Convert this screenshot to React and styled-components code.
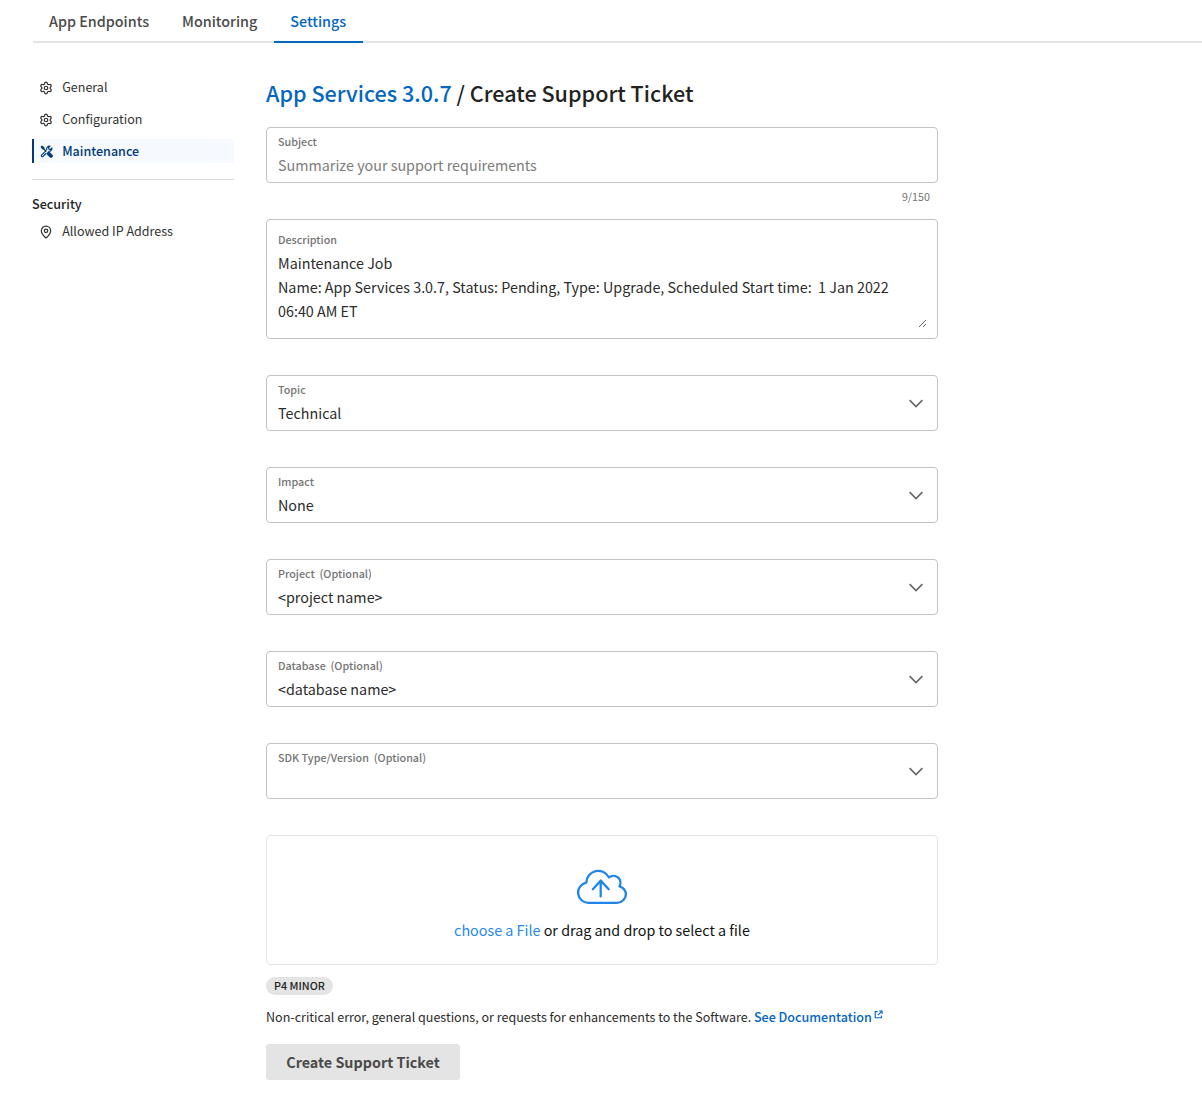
import React from "react";
import styled, { createGlobalStyle, css } from "styled-components";
import { Settings, MapPin } from "lucide-react";

const GlobalStyle = createGlobalStyle`
  *, *::before, *::after { box-sizing: border-box; }
  body {
    margin: 0;
    background: #fff;
    color: #2b2b2b;
    font-family: "Noto Sans CJK SC", "Noto Sans", sans-serif;
    font-size: 12.54px;
  }
`;

const Page = styled.div`
  width: 100%;
  min-height: 1112px;
  overflow: hidden;
`;

const TabBar = styled.nav`
  display: flex;
  height: 43px;
  margin-left: 33px;
  box-shadow: inset 0 -2px 0 #e4e4e4;
`;

const Tab = styled.a`
  padding: 0 16.5px;
  font-size: 14.33px;
  font-weight: 500;
  line-height: 41px;
  color: ${(p) => (p.$active ? "#0266c2" : "#4a4a4a")};
  border-bottom: 2px solid ${(p) => (p.$active ? "#0266c2" : "transparent")};
  &:first-child { margin-left: -0.5px; }
`;

const Body = styled.div`
  display: flex;
  gap: 32px;
  padding: 32px 32px 0;
`;

const Sidebar = styled.aside`
  width: 202px;
  flex: none;
`;

const NavList = styled.ul`
  display: flex;
  flex-direction: column;
  gap: 8px;
  margin: 0;
  padding: 0;
  list-style: none;
`;

const NavItem = styled.li`
  display: flex;
  align-items: center;
  gap: 9px;
  height: 24px;
  padding-left: 5.2px;
  border-left: 2px solid transparent;
  border-radius: 0 3px 3px 0;
  line-height: 22px;
  color: #333;
  ${(p) =>
    p.$active &&
    css`
      border-left-color: #003a78;
      background: #f6faff;
      color: #003a78;
      font-weight: 500;
    `}
`;

const NavIcon = styled.span`
  display: flex;
  flex: none;
  justify-content: center;
  width: 14px;
  padding-top: 1px;
`;

const Divider = styled.hr`
  margin: 16px 0 0;
  border: 0;
  border-top: 1px solid #d8d8d8;
`;

const NavHeading = styled.h2`
  margin: 13px 0 4px;
  font-size: 12.6px;
  font-weight: 500;
  line-height: 22px;
  color: #222;
`;

const Main = styled.main`
  width: 672px;
  flex: none;
`;

const Title = styled.h1`
  margin: 0 0 18px;
  padding-top: 1px;
  font-size: 21.57px;
  font-weight: 500;
  line-height: 33px;
  color: #222;
`;

const TitleLink = styled.a`
  color: #0266c2;
`;

const Fields = styled.div`
  display: flex;
  flex-direction: column;
  gap: 36px;
`;

const Field = styled.div`
  display: flex;
  align-items: center;
  justify-content: space-between;
  height: ${(p) => p.$height || 56}px;
  padding: 0 ${(p) => (p.$wide ? 10 : 14)}px 0 11px;
  border: 1px solid #c3c3c3;
  border-radius: 4px;
`;

const FieldText = styled.label`
  display: flex;
  flex-direction: column;
  flex: 1;
  height: ${(p) => (p.$tall ? 96 : 44)}px;
`;

const FieldLabel = styled.span`
  flex: none;
  height: 20px;
  font-size: 10.75px;
  font-weight: 500;
  line-height: 17px;
  color: #747474;
`;

const Optional = styled.span`
  margin-left: 4.8px;
`;

const control = css`
  display: block;
  flex: none;
  width: 100%;
  margin: 0;
  padding: 0;
  border: 0;
  outline: 0;
  background: none;
  font-family: inherit;
  font-size: 14.33px;
  line-height: 24px;
  color: #2b2b2b;
`;

const Input = styled.input`
  ${control}
  height: 24px;
  &::placeholder { color: #7c7c7c; opacity: 1; }
`;

const TextArea = styled.textarea`
  ${control}
  height: 77px;
  overflow: hidden;
  resize: vertical;
`;

const Value = styled.span`
  ${control}
  height: 24px;
`;

const Counter = styled.div`
  height: 36px;
  padding: 5px 8px 0 0;
  font-size: 10.75px;
  line-height: 17px;
  text-align: right;
  color: #747474;
`;

const DropZone = styled.div`
  display: flex;
  flex-direction: column;
  align-items: center;
  height: 130px;
  padding-top: 33px;
  border: 1px solid #e5e5e5;
  border-radius: 4px;
`;

const DropText = styled.p`
  margin: 13px 0 0;
  font-size: 14.33px;
  line-height: 24px;
  color: #111;
`;

const ChooseLink = styled.a`
  color: #2488ea;
`;

const Badge = styled.span`
  display: block;
  width: 67px;
  height: 18px;
  margin-top: 12px;
  border-radius: 9px;
  background: #e4e4e4;
  font-size: 10.75px;
  font-weight: 500;
  line-height: 17px;
  text-align: center;
  color: #222;
`;

const Note = styled.p`
  display: flex;
  margin: 11px 0 0;
  line-height: 22px;
  white-space: pre;
`;

const DocLink = styled.a`
  display: flex;
  gap: 2px;
  font-weight: 500;
  color: #0266c2;
  svg { margin-top: 4px; }
`;

const Submit = styled.button`
  display: block;
  width: 194px;
  height: 36px;
  margin-top: 16px;
  padding: 0;
  border: 0;
  border-radius: 3px;
  background: #e4e4e4;
  font-family: inherit;
  font-size: 14.33px;
  font-weight: 700;
  line-height: 34px;
  color: #4a4a4a;
`;

const ToolsIcon = () => (
  <svg width="13" height="13" viewBox="0 0 26 26" fill="none">
    <path d="M1 3.5 3.5 1l5 3.2.4 2.6 5 5-2.1 2.1-5-5-2.6-.4z" fill="currentColor" />
    <path d="M14 16.2 16.2 14l2.6.2 5.4 5.4a3.2 3.2 0 0 1-4.6 4.6l-5.4-5.4z" fill="currentColor" stroke="currentColor" strokeWidth="1.2" />
    <path
      d="M10.6 12.6 3 20.2a2 2 0 0 0 2.8 2.8l6-6M13.6 9.6c-.8-3.4.6-7.6 6.4-7.4l-2.8 3 .5 3.1 3.1.5 3-2.8c.4 4.4-2.6 6.9-6.4 6.4"
      stroke="currentColor"
      strokeWidth="2.2"
      strokeLinejoin="round"
      strokeLinecap="round"
    />
  </svg>
);

const Chevron = () => (
  <svg width="14" height="9" viewBox="0 0 14 9" fill="none">
    <path d="M.6 1.1 7 7.5l6.4-6.4" stroke="#686868" strokeWidth="1.65" />
  </svg>
);

const CloudUpload = () => (
  <svg width="50" height="36" viewBox="0 0 50 36" fill="none" stroke="#1f86e8" strokeWidth="2.3" strokeLinecap="round" strokeLinejoin="round">
    <path d="M11.5 33.8A10.2 10.2 0 0 1 9.3 13.6 12 12 0 0 1 32 8.4a7 7 0 0 1 10.5 8.9A8.9 8.9 0 0 1 48.9 25 8.9 8.9 0 0 1 40 33.8z" />
    <path d="M23.7 27.4V11.6M15.8 20.2l7.9-8.6 8 8.6" />
  </svg>
);

const ExternalIcon = () => (
  <svg width="9" height="9" viewBox="0 0 9 9" fill="none" stroke="currentColor" strokeWidth="1.1">
    <path d="M3.6 1.6H1.2v6.2h6.2V5.4M5.2 1h2.9v2.9M8 1.1 3.9 5.2" />
  </svg>
);

const SELECTS = [
  { label: "Topic", value: "Technical" },
  { label: "Impact", value: "None" },
  { label: "Project", optional: true, value: "<project name>" },
  { label: "Database", optional: true, value: "<database name>" },
  { label: "SDK Type/Version", optional: true, value: "" },
];

const DESCRIPTION =
  "Maintenance Job\nName: App Services 3.0.7, Status: Pending, Type: Upgrade, Scheduled Start time:  1 Jan 2022 06:40 AM ET";

const SelectField = ({ label, optional, value }) => (
  <Field>
    <FieldText as="div">
      <FieldLabel>
        {label}
        {optional && <Optional>(Optional)</Optional>}
      </FieldLabel>
      <Value>{value}</Value>
    </FieldText>
    <Chevron />
  </Field>
);

export default function App() {
  return (
    <Page>
      <GlobalStyle />
      <TabBar>
        <Tab>App Endpoints</Tab>
        <Tab>Monitoring</Tab>
        <Tab $active>Settings</Tab>
      </TabBar>
      <Body>
        <Sidebar>
          <NavList>
            <NavItem>
              <NavIcon><Settings size={14} strokeWidth={2.1} /></NavIcon>
              General
            </NavItem>
            <NavItem>
              <NavIcon><Settings size={14} strokeWidth={2.1} /></NavIcon>
              Configuration
            </NavItem>
            <NavItem $active>
              <NavIcon><ToolsIcon /></NavIcon>
              Maintenance
            </NavItem>
          </NavList>
          <Divider />
          <NavHeading>Security</NavHeading>
          <NavList>
            <NavItem>
              <NavIcon><MapPin size={14} strokeWidth={2.1} /></NavIcon>
              Allowed IP Address
            </NavItem>
          </NavList>
        </Sidebar>
        <Main>
          <Title>
            <TitleLink>App Services 3.0.7</TitleLink> / Create Support Ticket
          </Title>
          <Field $wide>
            <FieldText>
              <FieldLabel>Subject</FieldLabel>
              <Input placeholder="Summarize your support requirements" />
            </FieldText>
          </Field>
          <Counter>9/150</Counter>
          <Fields>
            <Field $height={120} $wide>
              <FieldText $tall>
                <FieldLabel>Description</FieldLabel>
                <TextArea defaultValue={DESCRIPTION} spellCheck={false} />
              </FieldText>
            </Field>
            {SELECTS.map((s) => (
              <SelectField key={s.label} {...s} />
            ))}
            <DropZone>
              <CloudUpload />
              <DropText>
                <ChooseLink>choose a File</ChooseLink> or drag and drop to select a file
              </DropText>
            </DropZone>
          </Fields>
          <Badge>P4 MINOR</Badge>
          <Note>
            {"Non-critical error, general questions, or requests for enhancements to the Software. "}
            <DocLink>
              See Documentation
              <ExternalIcon />
            </DocLink>
          </Note>
          <Submit>Create Support Ticket</Submit>
        </Main>
      </Body>
    </Page>
  );
}
